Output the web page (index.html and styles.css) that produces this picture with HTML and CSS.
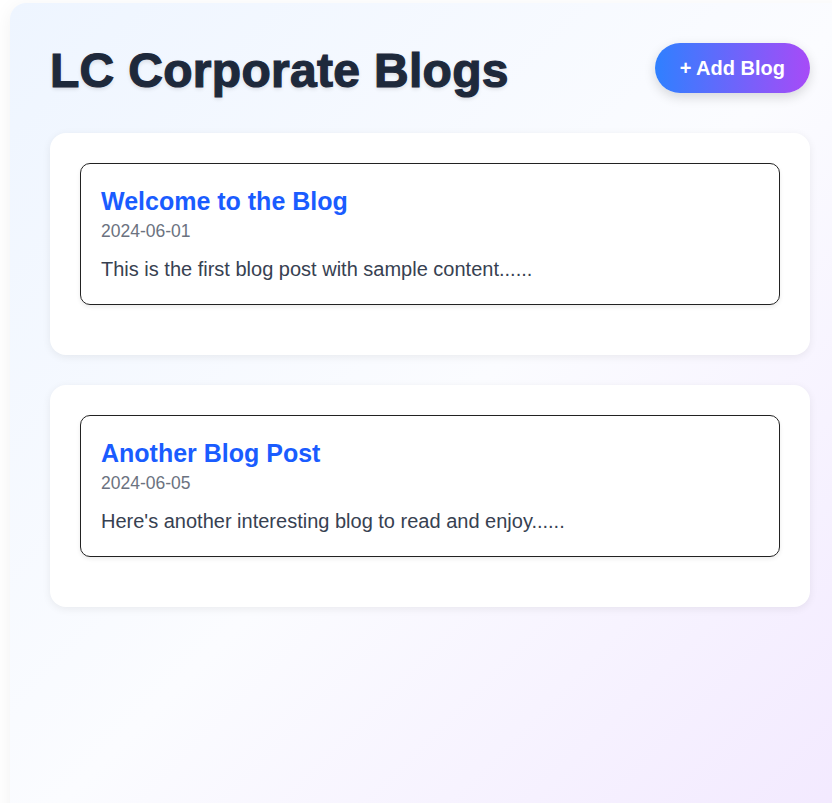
FILE: index.html
```html
<!DOCTYPE html>
<html lang="en">
<head>
<meta charset="UTF-8">
<title>LC Corporate Blogs</title>
<link rel="stylesheet" href="styles.css">
</head>
<body>
  <div class="app">
    <header class="header">
      <h1 class="title">LC Corporate Blogs</h1>
      <button class="add-btn">+ Add Blog</button>
    </header>
    <section class="card">
      <article class="post">
        <h2 class="post-title">Welcome to the Blog</h2>
        <div class="post-date">2024-06-01</div>
        <p class="post-body">This is the first blog post with sample content......</p>
      </article>
    </section>
    <section class="card">
      <article class="post">
        <h2 class="post-title">Another Blog Post</h2>
        <div class="post-date">2024-06-05</div>
        <p class="post-body">Here's another interesting blog to read and enjoy......</p>
      </article>
    </section>
  </div>
</body>
</html>
```
FILE: styles.css
```css
html, body {
  margin: 0;
  padding: 0;
  background: #ffffff;
  overflow: hidden;
}
body {
  font-family: "Liberation Sans", Arial, sans-serif;
  padding: 3px 0 0 10px;
}
.app {
  box-sizing: border-box;
  width: 840px;
  min-height: 860px;
  padding: 40px;
  border-radius: 16px;
  background: linear-gradient(135deg, #eef5ff 0%, #fbfcff 50%, #f2e8ff 100%);
  box-shadow: 0 4px 20px rgba(0, 0, 0, 0.06);
}
.header {
  display: flex;
  justify-content: space-between;
  align-items: flex-start;
  margin-bottom: 35px;
}
.title {
  margin: 0;
  font-size: 48px;
  font-weight: 900;
  letter-spacing: 0.3px;
  color: #1e293b;
  -webkit-text-stroke: 1.2px #1e293b;
  text-shadow: 0 2px 4px rgba(0, 0, 0, 0.12);
}
.add-btn {
  height: 50px;
  padding: 0 25px;
  border: none;
  border-radius: 25px;
  background: linear-gradient(90deg, #2f80ff, #a74bf7);
  color: #ffffff;
  font-family: "Liberation Sans", Arial, sans-serif;
  font-size: 20px;
  font-weight: 700;
  box-shadow: 0 4px 12px rgba(0, 0, 0, 0.15);
}
.card {
  background: #ffffff;
  border-radius: 16px;
  padding: 30px 30px 50px;
  margin-bottom: 30px;
  box-shadow: 0 2px 8px rgba(0, 0, 0, 0.07);
}
.post {
  border: 1px solid #222222;
  border-radius: 10px;
  padding: 23px 20px 23px;
  box-shadow: 0 2px 4px rgba(0, 0, 0, 0.08);
}
.post-title {
  margin: 0 0 5px;
  font-size: 25px;
  font-weight: 700;
  color: #1a5cff;
}
.post-date {
  font-size: 17.5px;
  color: #6b7280;
}
.post-body {
  margin: 16px 0 0;
  font-size: 20px;
  color: #374151;
}
```
